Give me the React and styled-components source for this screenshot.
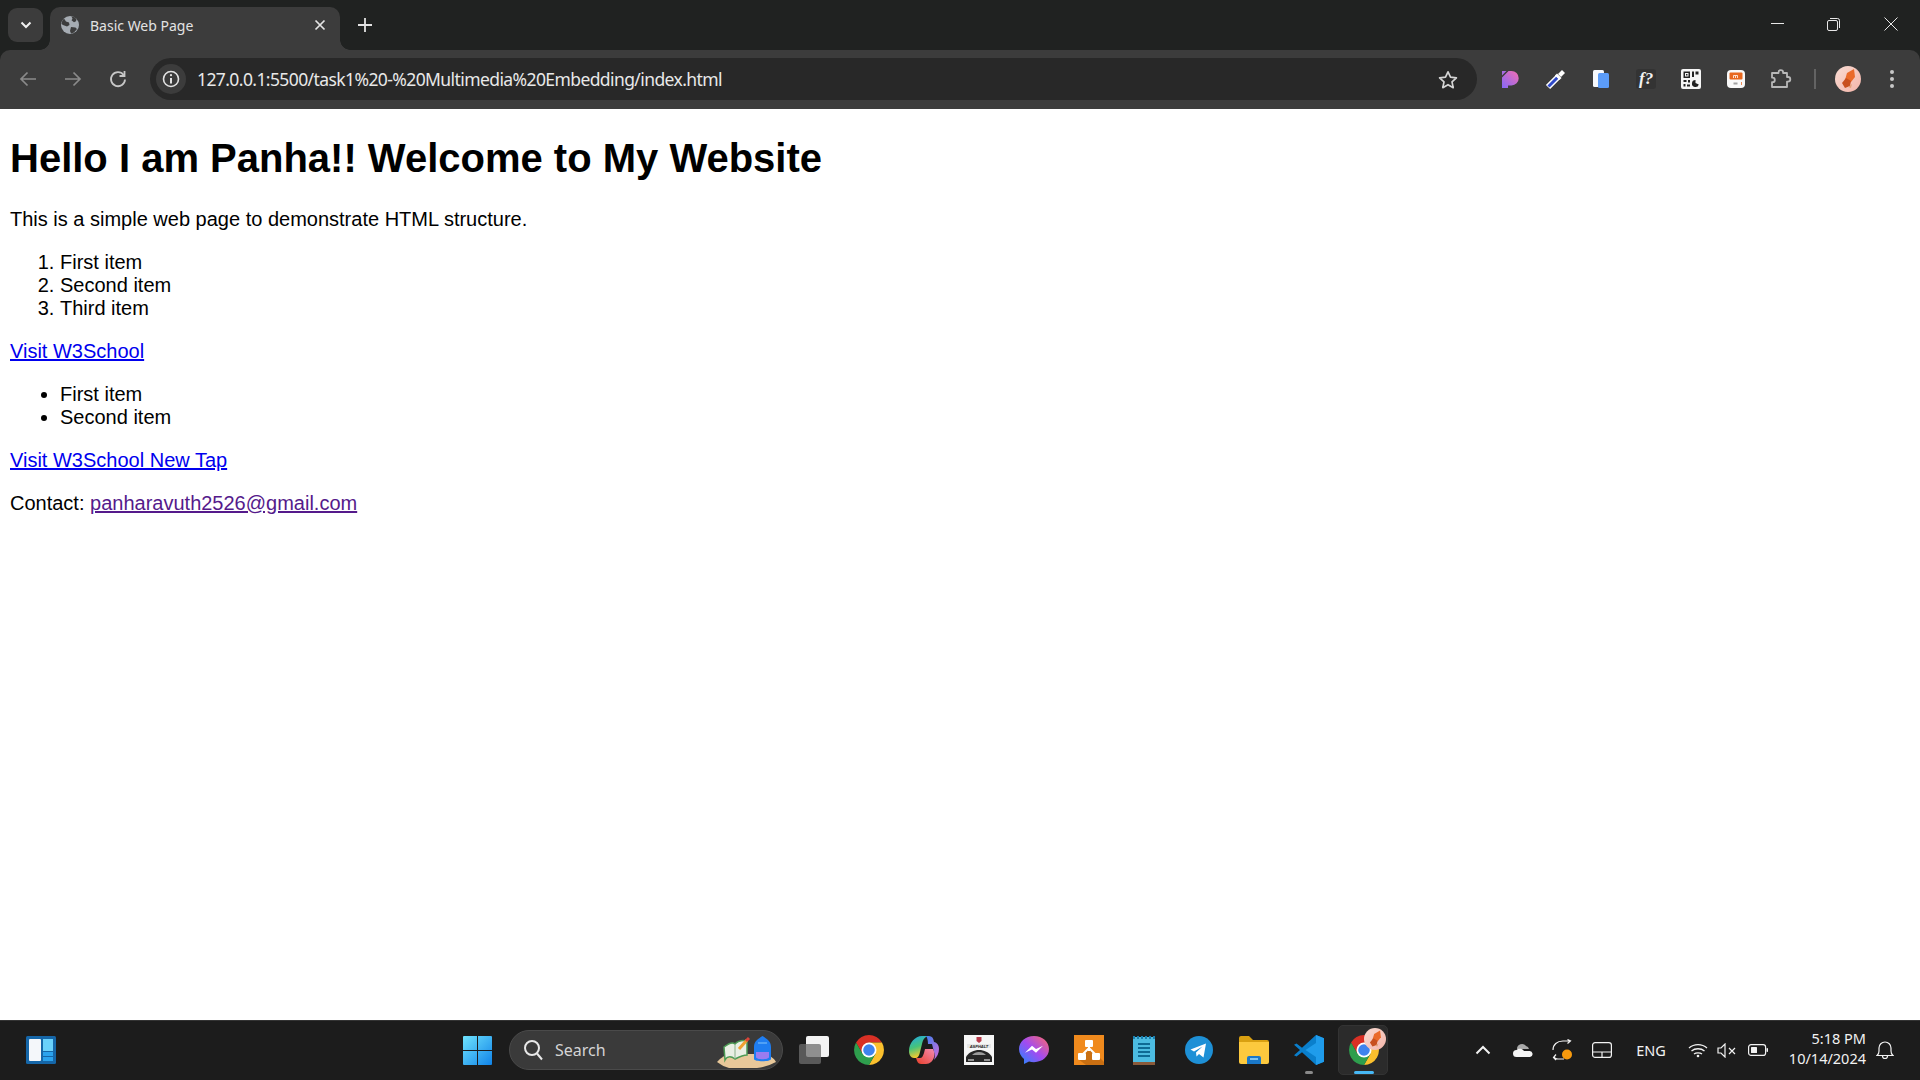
import styled, { createGlobalStyle } from "styled-components";

const GlobalStyle = createGlobalStyle`
    html, body {
        margin: 0;
        height: 100%;
        background: #fff;
    }
    #root {
        height: 100%;
    }
`;

const Screen = styled.div`
    width: 1920px;
    height: 1080px;
    display: flex;
    flex-direction: column;
    overflow: hidden;
    background: #202221;
`;

const TabStrip = styled.div`
    height: 50px;
    flex: none;
    display: flex;
    align-items: flex-end;
    padding-left: 8px;
`;

const TabListButton = styled.div`
    width: 35px;
    height: 34px;
    margin-bottom: 8px;
    border-radius: 9px;
    background: #3c3c3c;
    display: flex;
    align-items: center;
    justify-content: center;
`;

const Tab = styled.div`
    position: relative;
    width: 290px;
    height: 43px;
    margin-left: 7px;
    padding: 0 11px 7px;
    box-sizing: border-box;
    display: flex;
    align-items: center;
    background: #3c3c3c;
    border-radius: 10px 10px 0 0;
    &::before, &::after {
        content: "";
        position: absolute;
        bottom: 0;
        width: 10px;
        height: 10px;
    }
    &::before {
        left: -10px;
        background: radial-gradient(circle at 0 0, transparent 9.5px, #3c3c3c 10px);
    }
    &::after {
        right: -10px;
        background: radial-gradient(circle at 100% 0, transparent 9.5px, #3c3c3c 10px);
    }
`;

const TabTitle = styled.span`
    margin-left: 11px;
    flex: 1;
    font: 14px "Noto Sans", sans-serif;
    color: #e3e3e3;
`;

const NewTab = styled.div`
    width: 36px;
    height: 36px;
    margin: 0 0 7px 7px;
    display: flex;
    align-items: center;
    justify-content: center;
`;

const WindowControls = styled.div`
    margin-left: auto;
    padding-right: 1px;
    align-self: stretch;
    display: flex;
`;

const WindowButton = styled.div`
    width: ${p => p.$w}px;
    padding-bottom: 2px;
    display: flex;
    align-items: center;
    justify-content: center;
`;

const Toolbar = styled.div`
    height: 59px;
    flex: none;
    box-sizing: border-box;
    padding: 0 6px 1px 5px;
    display: flex;
    align-items: center;
    background: #3c3c3c;
    border-radius: 10px 10px 0 0;
`;

const NavButton = styled.div`
    width: 45px;
    display: flex;
    justify-content: center;
`;

const Omnibox = styled.div`
    flex: 1;
    height: 42px;
    margin-left: 10px;
    padding: 0 19px 0 6px;
    display: flex;
    align-items: center;
    background: #282828;
    border-radius: 21px;
`;

const SiteInfo = styled.div`
    width: 30px;
    height: 30px;
    border-radius: 50%;
    background: #3c3c3c;
    display: flex;
    align-items: center;
    justify-content: center;
`;

const Url = styled.span`
    margin-left: 11px;
    flex: 1;
    font: 17.5px "Noto Sans", sans-serif;
    letter-spacing: -0.59px;
    color: #e8e8e8;
`;

const Extensions = styled.div`
    margin-left: 10.4px;
    display: flex;
    align-items: center;
`;

const ExtensionSlot = styled.div`
    width: 45.2px;
    display: flex;
    justify-content: center;
`;

const Divider = styled.div`
    width: 2px;
    height: 20px;
    margin-left: 10px;
    background: #636363;
`;

const Avatar = styled.div`
    margin-left: 19px;
    width: 26px;
    height: 26px;
    display: flex;
`;

const MenuButton = styled.div`
    margin-left: 9px;
    width: 44px;
    display: flex;
    justify-content: center;
`;

const Page = styled.main`
    flex: 1;
    padding: 0 10px;
    background: #fff;
    color: #000;
    font: 20px "Liberation Sans", Arial, sans-serif;
`;

const Heading = styled.h1`
    margin: 26.8px 0;
    font-size: 40px;
    font-weight: 700;
`;

const Paragraph = styled.p`
    margin: 20px 0;
`;

const NumberList = styled.ol`
    margin: 20px 0;
    padding-left: 50px;
`;

const BulletList = styled.ul`
    margin: 20px 0;
    padding-left: 50px;
`;

const PageLink = styled.a`
    color: ${p => (p.$visited ? "#551a8b" : "#0000ee")};
    text-decoration: underline;
`;

const Taskbar = styled.footer`
    height: 60px;
    flex: none;
    box-sizing: border-box;
    padding: 0 16px 1px 26px;
    display: flex;
    align-items: center;
    background: #1c1c1c;
    border-top: 1px solid #333;
`;

const WidgetSlot = styled.div`
    width: 30px;
    display: flex;
`;

const StartSlot = styled.div`
    width: 30px;
    margin-left: 407px;
    display: flex;
`;

const SearchBox = styled.div`
    width: 274px;
    height: 40px;
    margin-left: 16px;
    padding: 0 5px 0 13px;
    box-sizing: border-box;
    display: flex;
    align-items: center;
    border-radius: 20px;
    background: #3a3a3a;
    border: 1px solid #4a4a4a;
`;

const SearchLabel = styled.span`
    flex: 1;
    margin-left: 12px;
    font: 16px "Noto Sans", sans-serif;
    color: #d4d4d4;
`;

const SearchArtWrap = styled.div`
    display: flex;
    align-self: flex-end;
    margin-bottom: 1px;
`;

const AppRow = styled.div`
    margin-left: 3px;
    display: flex;
    height: 100%;
`;

const AppSlot = styled.div`
    position: relative;
    width: 55px;
    display: flex;
    align-items: center;
    justify-content: center;
`;

const ActiveBox = styled.div`
    position: absolute;
    left: 2px;
    right: 3px;
    top: 4px;
    bottom: 4px;
    border-radius: 5px;
    background: #2b2b2b;
    border: 1px solid #333;
`;

const AppIcon = styled.div`
    position: relative;
    display: flex;
`;

const RunningDot = styled.div`
    position: absolute;
    bottom: 5px;
    left: 50%;
    transform: translateX(-50%);
    width: ${p => (p.$active ? 20 : 8)}px;
    height: 3.5px;
    border-radius: 2px;
    background: ${p => (p.$active ? "#47b8f5" : "#8a8a8a")};
`;

const BadgeOnIcon = styled.div`
    position: absolute;
    top: -7px;
    right: -7px;
    display: flex;
`;

const Tray = styled.div`
    margin-left: auto;
    display: flex;
    align-items: center;
    height: 100%;
`;

const TraySlot = styled.div`
    width: ${p => p.$w}px;
    display: flex;
    justify-content: center;
    align-items: center;
    color: #f2f2f2;
    font: 14.5px "Noto Sans", sans-serif;
`;

const Clock = styled.div`
    width: 89px;
    margin-top: -4px;
    text-align: right;
    color: #f2f2f2;
    font: 14.5px/20px "Noto Sans", sans-serif;
`;

const BackIcon = ({ color }) => (
    <svg width="20" height="20" viewBox="0 0 20 20" fill="none" stroke={color} strokeWidth="1.7">
        <path d="M18 10H3M9.5 3.5L3 10l6.5 6.5" />
    </svg>
);

const ForwardIcon = ({ color }) => (
    <svg width="20" height="20" viewBox="0 0 20 20" fill="none" stroke={color} strokeWidth="1.7">
        <path d="M2 10h15M10.5 3.5L17 10l-6.5 6.5" />
    </svg>
);

const ReloadIcon = () => (
    <svg width="20" height="20" viewBox="0 0 20 20" fill="none" stroke="#c7c7c7" strokeWidth="1.8">
        <path d="M15.6 6A7 7 0 1 0 17 10.5" />
        <path d="M16.5 2v5h-5" />
    </svg>
);

const GlobeIcon = () => (
    <svg width="18" height="18" viewBox="0 0 18 18">
        <circle cx="9" cy="9" r="9" fill="#a6acb3" />
        <path d="M3 2.5l2 3 3 1 .5 2.5-2.5 1.500L2 9 .5 8C.8 5.500 1.500 4 3 2.500zM10.500 .5l3 .8 2 2-.5 2-2 1-2.500-2 1-1.500zM10 11l4.500.5 1.500 1.500-3 3.500-3 1-1-2.500z" fill="#3c3c3c" />
    </svg>
);

const ChromeLogo = ({ size = 30 }) => (
    <svg width={size} height={size} viewBox="2 2 44 44">
        <path d="M43 13A22 22 0 0 0 5 13L14.5 29.5 24 24V13Z" fill="#d93025" />
        <path d="M43 13A22 22 0 0 1 24 46L33.5 29.5 24 24V13Z" fill="#fbc02d" />
        <path d="M24 46A22 22 0 0 1 5 13L14.5 29.5H33.5Z" fill="#2e9e4d" />
        <circle cx="24" cy="24" r="11" fill="#fff" />
        <circle cx="24" cy="24" r="8.5" fill="#3f83ee" />
    </svg>
);

const OrangeAvatar = ({ size = 26, idSuffix = "a" }) => (
    <svg width={size} height={size} viewBox="0 0 26 26">
        <defs>
            <linearGradient id={`av${idSuffix}`} x1="0" y1="0" x2="1" y2="1">
                <stop offset="0" stopColor="#f9dcd4" />
                <stop offset="1" stopColor="#f3b4a8" />
            </linearGradient>
        </defs>
        <circle cx="13" cy="13" r="13" fill={`url(#av${idSuffix})`} />
        <path d="M12 7l7-4 1 8-4 5-6-2z" fill="#ea6a2a" />
        <path d="M7 17l4-5 5 3-1 5-5 2z" fill="#c8501e" />
        <path d="M13 21l4-3-1 4z" fill="#e3a27a" />
    </svg>
);

const ExtensionIcons = [
    <svg key="p" width="18" height="18" viewBox="0 0 18 18">
        <defs>
            <linearGradient id="pgrad" x1="1" y1="0" x2="0" y2="1">
                <stop offset="0" stopColor="#f56eb0" />
                <stop offset="1" stopColor="#8468f8" />
            </linearGradient>
        </defs>
        <path d="M1 7.500L7.500 1h3a7.200 7.200 0 0 1 0 14.400H7V18H1z" fill="url(#pgrad)" />
        <path d="M1 1h4.500L1 5.500z" fill="#a66be0" />
    </svg>,
    <svg key="d" width="21" height="21" viewBox="0 0 21 21" fill="none">
        <path d="M3 18L13 8" stroke="#fff" strokeWidth="6" />
        <path d="M3.500 17.500L12.500 8.500" stroke="#2f49c9" strokeWidth="3" />
        <path d="M11 5.500l4.500 4.500" stroke="#fff" strokeWidth="3" />
        <path d="M13 5l4-4 3 3-4 4z" fill="#fff" />
    </svg>,
    <svg key="c" width="16" height="18" viewBox="0 0 16 18">
        <rect x="0" y="0" width="11" height="17" rx="1.5" fill="#f6f8fc" />
        <rect x="5" y="3" width="11" height="15" rx="1.5" fill="#5c9cf8" />
    </svg>,
    <svg key="f" width="20" height="20" viewBox="0 0 20 20">
        <rect width="20" height="20" rx="3" fill="#333" />
        <text x="3" y="15" fontFamily="Liberation Serif, serif" fontStyle="italic" fontWeight="700" fontSize="17" fill="#f2f2f2">f?</text>
    </svg>,
    <svg key="q" width="20" height="20" viewBox="0 0 20 20">
        <rect width="20" height="20" rx="2" fill="#f6f6f6" />
        <path d="M2.500 2.500h6.500v6.500H2.500zM4 4v3.500h3.500V4zM5 5h1.500v1.500H5zM11 2.500h2V8h-2zM14.500 2.500h3v3h-3zM2.500 11h3v2h-3zM7 11h2v2.500H7zM2.500 15h2v2.500h-2zM6 15.500h3v2H6z" fill="#222" fillRule="evenodd" />
        <path d="M14.500 11a3.500 3.500 0 1 0 3.300 4.500L14.500 14z" fill="#222" />
    </svg>,
    <svg key="m" width="18" height="18" viewBox="0 0 18 18">
        <rect width="18" height="18" rx="4" fill="#f8f8f8" />
        <rect x="2.500" y="2.500" width="13" height="7" rx="1" fill="#e8681f" />
        <path d="M6.500 8V5.500h2V8M8.500 5.500h2V8" stroke="#fff" fill="none" strokeWidth=".8" />
        <path d="M6.500 12.500h4v2h-4z" fill="#a0a0a0" />
        <path d="M14 12h1v3h-1z" fill="#ee8a55" />
    </svg>,
    <svg key="e" width="22" height="20" viewBox="0 0 22 20" fill="none" stroke="#b8b8b8" strokeWidth="1.8" strokeLinejoin="round">
        <path d="M2 4h6.500V3.500a2.300 2.300 0 0 1 4.600 0V4H17v4h1a2.300 2.300 0 0 1 0 4.600h-1V18H2v-4.800h.5a2.300 2.300 0 0 0 0-4.600H2z" />
    </svg>,
];

const WidgetsIcon = () => (
    <svg width="30" height="28" viewBox="0 0 30 28">
        <rect width="30" height="28" rx="1.5" fill="#1566a8" />
        <rect x="3" y="3" width="12" height="22" rx="1" fill="#f4f7fa" />
        <rect x="17" y="3" width="10" height="12" fill="#6ad1fb" />
        <rect x="17" y="16" width="10" height="4" fill="#2ba3ee" />
        <rect x="17" y="21" width="10" height="4" fill="#2ba3ee" />
    </svg>
);

const StartIcon = () => (
    <svg width="29" height="29" viewBox="0 0 29 29">
        <defs>
            <linearGradient id="win" x1="0" y1="0" x2="1" y2="1">
                <stop offset="0" stopColor="#6fe3fd" />
                <stop offset="1" stopColor="#1083e8" />
            </linearGradient>
        </defs>
        <path d="M1 0h13v14H0V1a1 1 0 0 1 1-1zM15 0h13a1 1 0 0 1 1 1v13H15zM0 15h14v14H1a1 1 0 0 1-1-1zM15 15h14v13a1 1 0 0 1-1 1H15z" fill="url(#win)" />
    </svg>
);

const SearchGlyph = () => (
    <svg width="20" height="22" viewBox="0 0 20 22" fill="none" stroke="#e8e8e8" strokeWidth="2">
        <circle cx="9" cy="9" r="7" />
        <path d="M14 14.500l5 6" />
    </svg>
);

const SearchArt = () => (
    <svg width="60" height="33" viewBox="0 0 60 33">
        <path d="M0 27Q6 20 14 19H50Q58 24 59 27Q50 32 40 33H12Q5 31 0 27z" fill="#e8c89a" />
        <path d="M7 12C12 8 16 7 18 9 21 6 26 5 30 6V20C26 20 22 22 18 24 14 21 10 21 8 25z" fill="#e9efe4" stroke="#4c9a54" strokeWidth="1.500" />
        <path d="M18 9V24" stroke="#8ab08a" strokeWidth="1" />
        <path d="M22 14l8-9" stroke="#f0a030" strokeWidth="3" />
        <path d="M29 6l3-3" stroke="#d8453a" strokeWidth="3" />
        <path d="M37 12C37 6 41 4 45.500 1 50 4 54 6 54 12V24C54 27 37 27 37 24z" fill="#1f7df0" />
        <path d="M39 17H52V22C52 25 39 25 39 22z" fill="#9a7cf0" />
        <path d="M41 8H50" stroke="#62aef8" strokeWidth="1.500" />
    </svg>
);

const TaskViewIcon = () => (
    <svg width="30" height="28" viewBox="0 0 30 28">
        <rect x="7" y="0" width="23" height="21" rx="2" fill="#f4f4f4" />
        <rect x="0" y="8" width="22" height="20" rx="2" fill="#6e6e6e" fillOpacity=".75" />
    </svg>
);

const CopilotIcon = () => (
    <svg width="30" height="28" viewBox="0 0 30 28">
        <defs>
            <linearGradient id="cop1" x1="0" y1="0" x2=".3" y2="1">
                <stop offset="0" stopColor="#1fa8e8" />
                <stop offset=".55" stopColor="#46c47a" />
                <stop offset="1" stopColor="#f7c92e" />
            </linearGradient>
            <linearGradient id="cop2" x1="0" y1="0" x2="1" y2="1">
                <stop offset="0" stopColor="#3f7ff0" />
                <stop offset="1" stopColor="#d56cd8" />
            </linearGradient>
            <linearGradient id="cop3" x1="0" y1="1" x2="1" y2="0">
                <stop offset="0" stopColor="#e8402a" />
                <stop offset="1" stopColor="#f58ab0" />
            </linearGradient>
        </defs>
        <path d="M13 0h6c-3 1-5 3-6 8l-2 8c-1 4-2 6-5 6H5C2 22 0 19 0 15 0 7 6 0 13 0z" fill="url(#cop1)" />
        <path d="M17 0h3c3 0 4.500 2 5 6 3 .5 5 3 5 7 0 4-2 8-5 11 1-3 1-5 0-8l-2-8H19c0-4-1-7-2-8z" fill="url(#cop2)" />
        <path d="M7 22h4c2 0 3-2 4-5l1-4h8c1 2 2 5 1 8-1 4-4 7-8 7h-5c-3 0-4-3-5-6z" fill="url(#cop3)" />
    </svg>
);

const AsphaltIcon = () => (
    <svg width="30" height="30" viewBox="0 0 30 30">
        <rect width="30" height="30" fill="#f6f6f6" />
        <path d="M12.500 2h5v4l-2.500 2-2.500-2z" fill="#b83a4a" />
        <rect x="3" y="9" width="24" height="4" fill="#e6e6e6" />
        <text x="15" y="12.500" textAnchor="middle" fontFamily="Liberation Sans, sans-serif" fontStyle="italic" fontWeight="700" fontSize="4" fill="#222">ASPHALT</text>
        <path d="M2 22c3-5 8-7 13-7s10 2 13 7v5H2z" fill="#262626" />
        <path d="M8 20c2-2 4-3 7-3s5 1 7 3z" fill="#9a9a9a" />
        <path d="M4 25h6M20 25h6" stroke="#bbb" strokeWidth="1.500" />
    </svg>
);

const MessengerIcon = () => (
    <svg width="30" height="30" viewBox="0 0 30 32" preserveAspectRatio="none">
        <defs>
            <linearGradient id="msg" x1="0" y1="1" x2="1" y2="0">
                <stop offset="0" stopColor="#1f8bff" />
                <stop offset=".5" stopColor="#a24bf0" />
                <stop offset="1" stopColor="#ff6a6a" />
            </linearGradient>
        </defs>
        <path d="M15 1C6.500 1 0 7.200 0 15c0 4.400 2 8 5 10.500V31l5-2.800c1.500.5 3.200.8 5 .8 8.500 0 15-6.200 15-14S23.500 1 15 1z" fill="url(#msg)" />
        <path d="M6 19l7-7.500 4 3.500 7-3.500-7 7.500-4-3.500z" fill="#fff" />
    </svg>
);

const DrawioIcon = () => (
    <svg width="30" height="30" viewBox="0 0 30 30">
        <rect width="30" height="30" fill="#f08a1d" />
        <path d="M15 12l15 15v3H12L4 24z" fill="#c96f12" />
        <path d="M15 10v6M15 13L8 20M15 13l7 7" stroke="#fff" strokeWidth="2" fill="none" />
        <rect x="11" y="5" width="8" height="7" rx="1" fill="#fff" />
        <rect x="4" y="18" width="8" height="7" rx="1" fill="#fff" />
        <rect x="18" y="18" width="8" height="7" rx="1" fill="#fff" />
    </svg>
);

const NotepadIcon = () => (
    <svg width="22" height="30" viewBox="0 0 22 30">
        <rect x="0" y="2" width="22" height="26" fill="#4cbbe0" />
        <rect x="0" y="27" width="22" height="3" fill="#8a5a3a" />
        <path d="M1 1v3M5 1v3M9 1v3M13 1v3M17 1v3M21 1v3" stroke="#1a7fb0" strokeWidth="2" />
        <path d="M5 9h12M5 13h12M5 17h12M5 21h12" stroke="#0f6a94" strokeWidth="1.8" />
    </svg>
);

const TelegramIcon = () => (
    <svg width="28" height="28" viewBox="0 0 28 28">
        <circle cx="14" cy="14" r="14" fill="#1e90d6" />
        <path d="M5.500 13.500l15.500-6-2.500 14-4.500-3.500-2.500 2.500-.5-4 6.500-6-8.500 5z" fill="#fff" />
    </svg>
);

const FolderIcon = () => (
    <svg width="30" height="28" viewBox="0 0 30 28">
        <path d="M0 2a2 2 0 0 1 2-2h8l4 4h14a2 2 0 0 1 2 2v4H0z" fill="#d9a011" />
        <path d="M0 6h30v20a2 2 0 0 1-2 2H2a2 2 0 0 1-2-2z" fill="#fcc93e" />
        <path d="M8 28v-6a2 2 0 0 1 2-2h10a2 2 0 0 1 2 2v6z" fill="#1a78c9" />
        <rect x="11" y="22" width="8" height="2" fill="#7fc4f0" />
    </svg>
);

const VsCodeIcon = () => (
    <svg width="30" height="30" viewBox="0 0 30 32" preserveAspectRatio="none">
        <path d="M22 0l8 3.500v25L22 32 8 18.500 2.500 23 0 21.500 6 16 0 10.500 2.500 9 8 13.500z" fill="#0a7fcc" />
        <path d="M22 0l8 3.500v25L22 32zM22 8.500L11.500 16 22 23.500z" fill="#1f9ceb" fillRule="evenodd" />
    </svg>
);

const ChevronUp = () => (
    <svg width="16" height="10" viewBox="0 0 16 10" fill="none" stroke="#f2f2f2" strokeWidth="2">
        <path d="M1.500 8.500L8 2l6.500 6.500" />
    </svg>
);

const CloudIcon = () => (
    <svg width="20" height="14" viewBox="0 0 20 14">
        <path d="M4 6a5 5 0 0 1 9-3 4 4 0 0 1 3 3H4z" fill="#a8a8a8" />
        <path d="M3.500 14a3.500 3.500 0 0 1 0-7C5 5.500 9 5 11 8h5a3 3 0 0 1 1 6z" fill="#f4f4f4" />
    </svg>
);

const SyncIcon = () => (
    <svg width="22" height="22" viewBox="0 0 22 22" fill="none" stroke="#f2f2f2" strokeWidth="1.2">
        <path d="M1 11C1 5.500 5 2 11 2h7M15.500 .5L18.500 2 15.500 4.500" />
        <path d="M12 20H6c-2 0-3.500-1-4-2M4 15.500L1.500 18.500 4 21" />
        <circle cx="15" cy="15.500" r="5" fill="#f79a0e" stroke="none" />
    </svg>
);

const TabletIcon = () => (
    <svg width="20" height="16" viewBox="0 0 20 16" fill="none" stroke="#f2f2f2" strokeWidth="1.2">
        <rect x=".6" y=".6" width="18.8" height="14.8" rx="2.500" />
        <path d="M.6 10h18.800M10 10v5.400" />
    </svg>
);

const WifiIcon = () => (
    <svg width="20" height="15" viewBox="0 0 20 15" fill="none" stroke="#f2f2f2" strokeWidth="1.3">
        <path d="M1 5c5-4.500 13-4.500 18 0M3.500 8c3.500-3 9.500-3 13 0M6 11c2-1.500 6-1.500 8 0" />
        <circle cx="10" cy="13" r="1.3" fill="#f2f2f2" stroke="none" />
    </svg>
);

const MuteIcon = () => (
    <svg width="20" height="15" viewBox="0 0 20 15" fill="none" stroke="#f2f2f2" strokeWidth="1.2">
        <path d="M1 5v5h3l4 4V1L4 5z" />
        <path d="M12 5l6 6M18 5l-6 6" />
    </svg>
);

const BatteryIcon = () => (
    <svg width="20" height="12" viewBox="0 0 20 12">
        <rect x=".6" y=".6" width="17" height="10.8" rx="2.500" fill="none" stroke="#f2f2f2" strokeWidth="1.2" />
        <rect x="3" y="3" width="6" height="6" rx=".5" fill="#f2f2f2" />
        <rect x="18.500" y="4" width="1.500" height="4" rx=".7" fill="#f2f2f2" />
    </svg>
);

const BellIcon = () => (
    <svg width="18" height="19" viewBox="0 0 18 19" fill="none" stroke="#f2f2f2" strokeWidth="1.2">
        <path d="M1 14.500c1.500-1 2-2.500 2-4.500V7a6 6 0 0 1 12 0v3c0 2 .5 3.500 2 4.500z" />
        <path d="M6.500 15a2.500 2.500 0 0 0 5 0" />
    </svg>
);

const taskbarApps = [
    { id: "taskview", icon: <TaskViewIcon /> },
    { id: "chrome", icon: <ChromeLogo /> },
    { id: "copilot", icon: <CopilotIcon /> },
    { id: "asphalt", icon: <AsphaltIcon /> },
    { id: "messenger", icon: <MessengerIcon /> },
    { id: "drawio", icon: <DrawioIcon /> },
    { id: "notepad", icon: <NotepadIcon /> },
    { id: "telegram", icon: <TelegramIcon /> },
    { id: "explorer", icon: <FolderIcon /> },
    { id: "vscode", icon: <VsCodeIcon />, running: true },
];

const App = () => {
    return (
        <Screen>
            <GlobalStyle />
            <TabStrip>
                <TabListButton>
                    <svg width="12" height="8" viewBox="0 0 12 8" fill="none" stroke="#f0f0f0" strokeWidth="2">
                        <path d="M1.500 1.500L6 6l4.500-4.500" />
                    </svg>
                </TabListButton>
                <Tab>
                    <GlobeIcon />
                    <TabTitle>Basic Web Page</TabTitle>
                    <svg width="12" height="12" viewBox="0 0 12 12" stroke="#e3e3e3" strokeWidth="1.7" style={{ marginRight: 3 }}>
                        <path d="M1.500 1.500l9 9M10.500 1.500l-9 9" />
                    </svg>
                </Tab>
                <NewTab>
                    <svg width="14" height="14" viewBox="0 0 14 14" stroke="#e3e3e3" strokeWidth="1.8">
                        <path d="M7 0v14M0 7h14" />
                    </svg>
                </NewTab>
                <WindowControls>
                    <WindowButton $w={55}>
                        <svg width="13" height="2" viewBox="0 0 13 2"><rect width="13" height="1" fill="#e8e8e8" /></svg>
                    </WindowButton>
                    <WindowButton $w={57}>
                        <svg width="13" height="13" viewBox="0 0 13 13" fill="none" stroke="#e8e8e8">
                            <rect x=".5" y="2.500" width="10" height="10" rx="1.500" />
                            <path d="M3 .5h7.500a2 2 0 0 1 2 2V10" />
                        </svg>
                    </WindowButton>
                    <WindowButton $w={57}>
                        <svg width="14" height="14" viewBox="0 0 14 14" stroke="#e8e8e8">
                            <path d="M.5 .5l13 13M13.500 .5l-13 13" />
                        </svg>
                    </WindowButton>
                </WindowControls>
            </TabStrip>

            <Toolbar>
                <NavButton><BackIcon color="#8a8a8a" /></NavButton>
                <NavButton><ForwardIcon color="#8a8a8a" /></NavButton>
                <NavButton><ReloadIcon /></NavButton>
                <Omnibox>
                    <SiteInfo>
                        <svg width="18" height="18" viewBox="0 0 18 18" fill="none" stroke="#e3e3e3" strokeWidth="1.6">
                            <circle cx="9" cy="9" r="7.500" />
                            <path d="M9 8v5.500" strokeWidth="2" />
                            <circle cx="9" cy="5.200" r="1.100" fill="#e3e3e3" stroke="none" />
                        </svg>
                    </SiteInfo>
                    <Url>127.0.0.1:5500/task1%20-%20Multimedia%20Embedding/index.html</Url>
                    <svg width="20" height="19" viewBox="0 0 20 19" fill="none" stroke="#d5d5d5" strokeWidth="1.7" strokeLinejoin="round">
                        <path d="M10 1.800l2.500 5.400 5.900.7-4.400 4 1.200 5.800-5.200-3-5.200 3 1.200-5.800-4.400-4 5.900-.7z" />
                    </svg>
                </Omnibox>
                <Extensions>
                    {ExtensionIcons.map(icon => (
                        <ExtensionSlot key={icon.key}>{icon}</ExtensionSlot>
                    ))}
                </Extensions>
                <Divider />
                <Avatar><OrangeAvatar /></Avatar>
                <MenuButton>
                    <svg width="6" height="20" viewBox="0 0 6 20" fill="#c7c7c7">
                        <circle cx="3" cy="3" r="2" />
                        <circle cx="3" cy="10" r="2" />
                        <circle cx="3" cy="17" r="2" />
                    </svg>
                </MenuButton>
            </Toolbar>

            <Page>
                <Heading>Hello I am Panha!! Welcome to My Website</Heading>
                <Paragraph>This is a simple web page to demonstrate HTML structure.</Paragraph>
                <NumberList>
                    <li>First item</li>
                    <li>Second item</li>
                    <li>Third item</li>
                </NumberList>
                <Paragraph><PageLink href="#">Visit W3School</PageLink></Paragraph>
                <BulletList>
                    <li>First item</li>
                    <li>Second item</li>
                </BulletList>
                <Paragraph><PageLink href="#">Visit W3School New Tap</PageLink></Paragraph>
                <Paragraph>Contact: <PageLink href="#" $visited>panharavuth2526@gmail.com</PageLink></Paragraph>
            </Page>

            <Taskbar>
                <WidgetSlot><WidgetsIcon /></WidgetSlot>
                <StartSlot><StartIcon /></StartSlot>
                <SearchBox>
                    <SearchGlyph />
                    <SearchLabel>Search</SearchLabel>
                    <SearchArtWrap><SearchArt /></SearchArtWrap>
                </SearchBox>
                <AppRow>
                    {taskbarApps.map(app => (
                        <AppSlot key={app.id}>
                            {app.icon}
                            {app.running && <RunningDot />}
                        </AppSlot>
                    ))}
                    <AppSlot>
                        <ActiveBox />
                        <AppIcon>
                            <ChromeLogo />
                            <BadgeOnIcon><OrangeAvatar size={22} idSuffix="b" /></BadgeOnIcon>
                        </AppIcon>
                        <RunningDot $active />
                    </AppSlot>
                </AppRow>
                <Tray>
                    <TraySlot $w={40}><ChevronUp /></TraySlot>
                    <TraySlot $w={40}><CloudIcon /></TraySlot>
                    <TraySlot $w={40}><SyncIcon /></TraySlot>
                    <TraySlot $w={38}><TabletIcon /></TraySlot>
                    <TraySlot $w={60}>ENG</TraySlot>
                    <TraySlot $w={34}><WifiIcon /></TraySlot>
                    <TraySlot $w={24}><MuteIcon /></TraySlot>
                    <TraySlot $w={38}><BatteryIcon /></TraySlot>
                    <Clock>5:18 PM<br />10/14/2024</Clock>
                    <TraySlot $w={38}><BellIcon /></TraySlot>
                </Tray>
            </Taskbar>
        </Screen>
    );
};

export default App;
